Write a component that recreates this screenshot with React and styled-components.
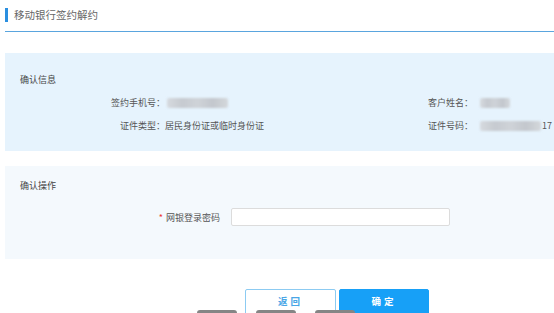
import React from "react";
import styled, { createGlobalStyle } from "styled-components";

const GlobalStyle = createGlobalStyle`
  body {
    margin: 0;
    background: #fff;
    overflow: hidden;
    font-family: "Microsoft YaHei", "Noto Sans CJK SC", sans-serif;
  }
`;

const Page = styled.div`
  position: relative;
  width: 640px;
  padding-left: 5px;
  color: #555;
`;

const Header = styled.div`
  display: flex;
  align-items: center;
  height: 30px;
  padding-top: 1px;
  border-bottom: 1px solid #5aa5de;
  h1 {
    margin: 0;
    font-size: 10.5px;
    font-weight: normal;
    color: #666;
    line-height: 14px;
    padding-left: 6px;
    border-left: 3px solid #2a8fe0;
    margin-bottom: 2px;
  }
`;

const Panel = styled.section`
  background: ${(p) => p.bg};
  margin-top: ${(p) => p.top}px;
  padding: ${(p) => p.pad};
`;

const PanelTitle = styled.div`
  font-size: 9px;
  line-height: 14px;
  color: #444;
  padding-left: 15px;
`;

const InfoRow = styled.div`
  display: flex;
  align-items: center;
  height: 14px;
  margin-top: 9px;
  font-size: 9px;
  line-height: 14px;
`;

const Label = styled.span`
  width: ${(p) => p.w}px;
  text-align: ${(p) => p.align || "right"};
  color: #555;
  flex-shrink: 0;
  white-space: nowrap;
`;

const Value = styled.span`
  width: ${(p) => p.w || "auto"};
  display: flex;
  align-items: center;
  color: #555;
  white-space: nowrap;
  flex-shrink: 0;
`;

const Blur = styled.span`
  display: inline-block;
  width: ${(p) => p.w}px;
  height: 10px;
  margin-left: ${(p) => p.ml || 2}px;
  background: linear-gradient(90deg, #d6dadf 0%, #c6cad0 25%, #cfd3d8 50%, #c3c7cd 75%, #d4d8dc 100%);
  filter: blur(0.8px);
  border-radius: 2px;
`;

const FormRow = styled.div`
  display: flex;
  align-items: center;
  margin-top: 15px;
  font-size: 9px;
`;

const Required = styled.span`
  color: #e33;
  margin-right: 3px;
`;

const Input = styled.input`
  width: 219px;
  height: 18px;
  box-sizing: border-box;
  border: 1px solid #dcdcdc;
  border-radius: 2px;
  background: #fff;
  margin-left: 11px;
  outline: none;
`;

const Actions = styled.div`
  display: flex;
  gap: 3px;
  margin-top: 30px;
  padding-left: 240px;
`;

const Button = styled.button`
  width: ${(p) => (p.primary ? 90 : 91)}px;
  height: 26px;
  box-sizing: border-box;
  border-radius: 2px;
  font-family: inherit;
  font-size: 9.5px;
  font-weight: bold;
  letter-spacing: 3px;
  padding: 0 0 2px;
  cursor: pointer;
  border: 1px solid ${(p) => (p.primary ? "#17a0f7" : "#8ccbf2")};
  background: ${(p) => (p.primary ? "#17a0f7" : "#fff")};
  color: ${(p) => (p.primary ? "#fff" : "#4aa6e6")};
`;

const Dock = styled.div`
  position: absolute;
  left: 197px;
  top: 310px;
  display: flex;
  gap: 19px;
`;

const DockItem = styled.span`
  width: 40px;
  height: 6px;
  border-radius: 3px;
  background: #858585;
`;

export default function App() {
  return (
    <Page>
      <GlobalStyle />
      <Header>
        <h1>移动银行签约解约</h1>
      </Header>

      <Panel bg="#e6f3fd" top={21} pad="20px 0 18px">
        <PanelTitle>确认信息</PanelTitle>
        <InfoRow>
          <Label w={160}>签约手机号：</Label>
          <Value w="263px">
            <Blur w={61} />
          </Value>
          <Label w={49} align="left">客户姓名：</Label>
          <Value>
            <Blur w={30} ml={3} />
          </Value>
        </InfoRow>
        <InfoRow>
          <Label w={160}>证件类型：</Label>
          <Value w="263px">居民身份证或临时身份证</Value>
          <Label w={49} align="left">证件号码：</Label>
          <Value>
            <Blur w={61} ml={3} />
            <span style={{ marginLeft: 1 }}>17</span>
          </Value>
        </InfoRow>
      </Panel>

      <Panel bg="#f4f9fd" top={15} pad="13px 0 33px">
        <PanelTitle>确认操作</PanelTitle>
        <FormRow>
          <Label w={215}>
            <Required>*</Required>网银登录密码
          </Label>
          <Input type="password" />
        </FormRow>
      </Panel>

      <Actions>
        <Button>返回</Button>
        <Button primary>确定</Button>
      </Actions>

      <Dock>
        <DockItem />
        <DockItem />
        <DockItem />
      </Dock>
    </Page>
  );
}
